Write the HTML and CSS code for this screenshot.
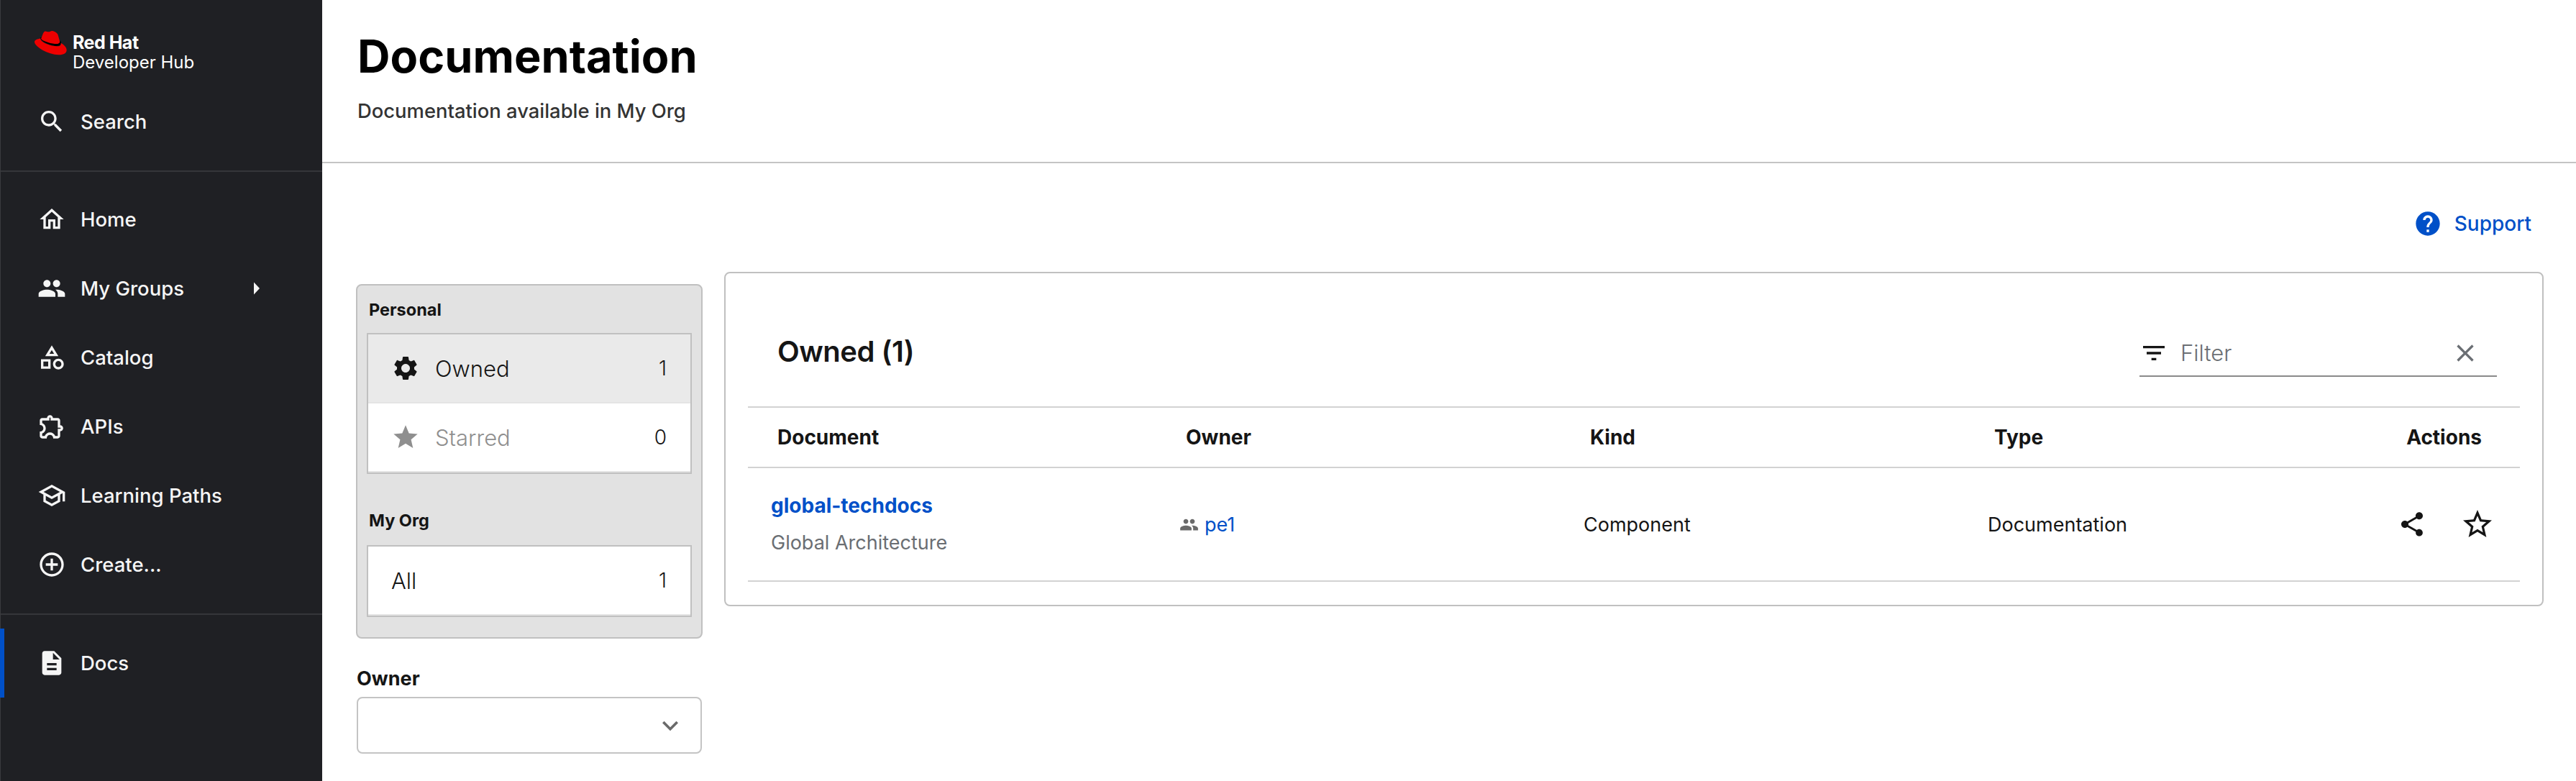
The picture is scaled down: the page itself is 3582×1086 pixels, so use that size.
FILE: index.html
```html
<!DOCTYPE html>
<html lang="en">
<head>
  <meta charset="UTF-8">
  <title>Documentation</title>
  <link rel="stylesheet" href="styles.css">
</head>
<body>
  <!-- sidebar -->
  <div class="sidebar">
    <div class="brand">
      <svg class="hat" viewBox="12 15 138 104"><path fill="#000" d="M37 44C37 58 75 76 100 79C115 81 127 76 125 62L118 54C118 66 105 68 95 66C75 62 45 50 40 42z"/><path fill="#ee0000" d="M40 48C44 38 48 22 55 17C60 14 66 19 72 19C78 19 82 14 88 15C98 17 110 24 112 32L120 60C120 69 110 71 98 70C75 68 42 56 40 48z"/><path fill="#ee0000" d="M37 47C25 50 12 52 12 62C12 82 70 117 115 117C138 117 149 108 149 96C149 85 138 74 124 66C127 76 118 82 105 80C75 78 37 62 37 47z"/></svg>
      <div class="brand-text">
        <div class="brand-name">Red Hat</div>
        <div class="brand-sub">Developer Hub</div>
      </div>
    </div>
    <div class="nav-item">
      <svg class="icon" viewBox="0 0 24 24"><path d="M15.5 14h-.79l-.28-.27C15.41 12.59 16 11.11 16 9.500 16 5.910 13.090 3 9.500 3S3 5.910 3 9.500 5.910 16 9.500 16c1.610 0 3.090-.59 4.230-1.570l.27.28v.79l5 4.990L20.490 19l-4.990-5zm-6 0C7.010 14 5 11.990 5 9.500S7.010 5 9.500 5 14 7.010 14 9.500 11.990 14 9.500 14z"/></svg>
      <span>Search</span>
    </div>
    <div class="nav-divider"></div>
    <div class="nav-item">
      <svg class="icon" viewBox="0 0 24 24"><path d="M12 5.690l5 4.500V18h-2v-6H9v6H7v-7.810l5-4.500M12 3L2 12h3v8h6v-6h2v6h6v-8h3L12 3z"/></svg>
      <span>Home</span>
    </div>
    <div class="nav-item">
      <svg class="icon" viewBox="0 0 24 24"><path d="M16 11c1.660 0 2.990-1.340 2.990-3S17.660 5 16 5c-1.660 0-3 1.340-3 3s1.340 3 3 3zm-8 0c1.660 0 2.990-1.340 2.990-3S9.660 5 8 5C6.340 5 5 6.340 5 8s1.340 3 3 3zm0 2c-2.330 0-7 1.170-7 3.500V19h14v-2.500c0-2.330-4.670-3.500-7-3.500zm8 0c-.29 0-.62.020-.97.050 1.160.84 1.970 1.970 1.970 3.450V19h6v-2.500c0-2.330-4.670-3.500-7-3.500z"/></svg>
      <span>My Groups</span>
      <svg class="nav-arrow" viewBox="0 0 10 24"><path d="M1 3.500l8 8.500-8 8.500z"/></svg>
    </div>
    <div class="nav-item">
      <svg class="icon" viewBox="0 0 24 24"><path d="M12 2l-5.500 9h11L12 2zm0 3.840L13.930 9h-3.870L12 5.840zM17.500 13c-2.490 0-4.500 2.010-4.500 4.500s2.010 4.500 4.500 4.500 4.500-2.010 4.500-4.500-2.010-4.500-4.500-4.500zm0 7c-1.380 0-2.500-1.120-2.500-2.500s1.120-2.500 2.500-2.500 2.500 1.120 2.500 2.500-1.120 2.500-2.500 2.500zM3 21.500h8v-8H3v8zm2-6h4v4H5v-4z"/></svg>
      <span>Catalog</span>
    </div>
    <div class="nav-item">
      <svg class="icon" viewBox="0 0 24 24"><path d="M10.500 4.500c.28 0 .5.220.5.5v2h6v6h2c.28 0 .5.220.5.5s-.22.5-.5.5h-2v6h-2.120c-.68-1.750-2.390-3-4.380-3s-3.700 1.250-4.380 3H4v-2.120c1.750-.68 3-2.390 3-4.380 0-1.990-1.240-3.700-2.990-4.380L4 7h6V5c0-.28.220-.5.5-.5m0-2C9.120 2.500 8 3.620 8 5H4c-1.100 0-1.990.9-1.990 2v3.800h.29c1.490 0 2.700 1.210 2.700 2.700s-1.210 2.700-2.700 2.700H2V20c0 1.100.9 2 2 2h3.800v-.3c0-1.490 1.210-2.700 2.700-2.700 1.490 0 2.700 1.210 2.700 2.700v.3H17c1.100 0 2-.9 2-2v-4c1.380 0 2.500-1.120 2.500-2.500S20.380 11 19 11V7c0-1.100-.9-2-2-2h-4c0-1.380-1.120-2.500-2.500-2.500z"/></svg>
      <span>APIs</span>
    </div>
    <div class="nav-item">
      <svg class="icon" viewBox="0 0 24 24"><path d="M12 3L1 9l4 2.180v6L12 21l7-3.820v-6l2-1.090V17h2V9L12 3zm6.820 6L12 12.720 5.180 9 12 5.280 18.820 9zM17 15.990l-5 2.730-5-2.730v-3.720L12 15l5-2.730v3.720z"/></svg>
      <span>Learning Paths</span>
    </div>
    <div class="nav-item">
      <svg class="icon" viewBox="0 0 24 24"><path d="M13 7h-2v4H7v2h4v4h2v-4h4v-2h-4V7zm-1-5C6.480 2 2 6.480 2 12s4.480 10 10 10 10-4.480 10-10S17.520 2 12 2zm0 18c-4.410 0-8-3.590-8-8s3.590-8 8-8 8 3.590 8 8-3.590 8-8 8z"/></svg>
      <span>Create...</span>
    </div>
    <div class="nav-divider lower"></div>
    <div class="nav-item active">
      <svg class="icon" viewBox="0 0 24 24"><path d="M14 2H6c-1.100 0-1.990.9-1.990 2L4 20c0 1.100.89 2 1.990 2H18c1.100 0 2-.9 2-2V8l-6-6zm2 16H8v-2h8v2zm0-4H8v-2h8v2zm-3-5V3.500L18.500 9H13z"/></svg>
      <span>Docs</span>
    </div>
  </div>

  <!-- main content -->
  <div class="main">
    <div class="header">
      <h1>Documentation</h1>
      <div class="subtitle">Documentation available in My Org</div>
    </div>

    <div class="content">
      <div class="support-row">
        <svg class="icon" viewBox="0 0 24 24"><path d="M12 2C6.480 2 2 6.480 2 12s4.480 10 10 10 10-4.480 10-10S17.520 2 12 2zm1 17h-2v-2h2v2zm2.070-7.750l-.9.920C13.450 12.900 13 13.500 13 15h-2v-.5c0-1.100.45-2.100 1.170-2.830l1.240-1.260c.37-.36.590-.86.590-1.410 0-1.100-.9-2-2-2s-2 .9-2 2H8c0-2.210 1.790-4 4-4s4 1.790 4 4c0 .88-.36 1.680-.93 2.250z"/></svg>
        <span>Support</span>
      </div>

      <div class="columns">
        <div class="filters">
          <div class="filter-panel">
            <div class="group-label">Personal</div>
            <div class="list-box">
              <div class="list-row selected">
                <svg class="icon" viewBox="0 0 24 24"><path d="M19.140 12.940c.04-.3.060-.61.060-.94 0-.32-.02-.64-.07-.94l2.030-1.580c.18-.14.230-.41.120-.61l-1.920-3.320c-.12-.22-.37-.29-.59-.22l-2.390.96c-.5-.38-1.030-.7-1.620-.94l-.36-2.540c-.04-.24-.24-.41-.48-.41h-3.840c-.24 0-.43.170-.47.41l-.36 2.540c-.59.240-1.130.570-1.620.94l-2.390-.96c-.22-.08-.47 0-.59.220L2.740 8.870c-.12.210-.08.470.120.610l2.030 1.580c-.05.3-.09.630-.09.940s.020.640.070.940l-2.030 1.580c-.18.140-.23.410-.12.610l1.920 3.320c.12.220.37.290.59.220l2.390-.96c.5.380 1.030.7 1.620.94l.36 2.540c.05.240.24.410.48.410h3.840c.24 0 .44-.17.47-.41l.36-2.540c.59-.24 1.130-.56 1.620-.94l2.390.96c.22.080.47 0 .59-.22l1.920-3.320c.12-.22.070-.47-.12-.61l-2.010-1.580zM12 15.600c-1.980 0-3.600-1.620-3.600-3.600s1.620-3.600 3.600-3.600 3.600 1.620 3.600 3.600-1.620 3.600-3.600 3.600z"/></svg>
                <span class="row-name">Owned</span>
                <span class="row-count">1</span>
              </div>
              <div class="list-row muted">
                <svg class="icon" viewBox="0 0 24 24"><path d="M12 17.270L18.180 21l-1.640-7.030L22 9.240l-7.190-.61L12 2 9.190 8.630 2 9.240l5.460 4.730L5.820 21z"/></svg>
                <span class="row-name">Starred</span>
                <span class="row-count">0</span>
              </div>
            </div>
            <div class="group-label org-label">My Org</div>
            <div class="list-box">
              <div class="list-row">
                <span class="row-name">All</span>
                <span class="row-count">1</span>
              </div>
            </div>
          </div>

          <div class="owner-field">
            <div class="owner-label">Owner</div>
            <div class="owner-select">
              <svg class="chevron" viewBox="0 0 24 24"><path d="M16.590 8.590L12 13.170 7.410 8.590 6 10l6 6 6-6z"/></svg>
            </div>
          </div>
        </div>

        <div class="card">
          <div class="toolbar">
            <h2>Owned (1)</h2>
            <div class="search-box">
              <svg class="icon" viewBox="0 0 24 24"><path d="M10 18h4v-2h-4v2zM3 6v2h18V6H3zm3 7h12v-2H6v2z"/></svg>
              <span class="placeholder">Filter</span>
              <svg class="icon clear" viewBox="0 0 24 24"><path d="M19 6.410L17.590 5 12 10.590 6.410 5 5 6.410 10.590 12 5 17.590 6.410 19 12 13.410 17.590 19 19 17.590 13.410 12 19 6.410z"/></svg>
            </div>
          </div>

          <table class="docs-table">
            <thead>
              <tr>
                <th class="col-doc">Document</th>
                <th class="col-std">Owner</th>
                <th class="col-std">Kind</th>
                <th class="col-std">Type</th>
                <th class="col-actions">Actions</th>
              </tr>
            </thead>
            <tbody>
              <tr>
                <td>
                  <a class="doc-link">global-techdocs</a>
                  <div class="doc-desc">Global Architecture</div>
                </td>
                <td>
                  <div class="owner-cell">
                    <svg class="people" viewBox="0 0 24 24"><path d="M16 11c1.660 0 2.990-1.340 2.990-3S17.660 5 16 5c-1.660 0-3 1.340-3 3s1.340 3 3 3zm-8 0c1.660 0 2.990-1.340 2.990-3S9.660 5 8 5C6.340 5 5 6.340 5 8s1.340 3 3 3zm0 2c-2.330 0-7 1.170-7 3.500V19h14v-2.500c0-2.330-4.670-3.500-7-3.500zm8 0c-.29 0-.62.020-.97.050 1.160.84 1.970 1.970 1.970 3.450V19h6v-2.500c0-2.330-4.670-3.500-7-3.500z"/></svg>
                    <a class="owner-link">pe1</a>
                  </div>
                </td>
                <td>Component</td>
                <td>Documentation</td>
                <td>
                  <div class="actions">
                    <svg class="icon" viewBox="0 0 24 24"><path d="M18 16.080c-.76 0-1.440.3-1.960.77L8.910 12.700c.05-.23.090-.46.090-.7s-.04-.47-.09-.7l7.050-4.110c.54.5 1.250.81 2.040.81 1.660 0 3-1.340 3-3s-1.340-3-3-3-3 1.340-3 3c0 .24.040.47.090.7L8.040 9.810C7.500 9.310 6.790 9 6 9c-1.660 0-3 1.340-3 3s1.340 3 3 3c.79 0 1.500-.31 2.040-.81l7.120 4.160c-.05.210-.08.430-.08.650 0 1.610 1.310 2.920 2.920 2.920 1.610 0 2.920-1.310 2.920-2.920s-1.310-2.920-2.920-2.920z"/></svg>
                    <svg class="star-outline" viewBox="0 0 24 24"><path d="M22 9.240l-7.190-.62L12 2 9.190 8.630 2 9.240l5.460 4.730L5.820 21 12 17.270 18.180 21l-1.630-7.030L22 9.240zM12 15.400l-3.760 2.270 1-4.280-3.320-2.880 4.380-.38L12 6.100l1.710 4.040 4.380.38-3.320 2.880 1 4.280L12 15.400z"/></svg>
                  </div>
                </td>
              </tr>
            </tbody>
          </table>
        </div>
      </div>
    </div>
  </div>
</body>
</html>
```

FILE: styles.css
```css
* {
  margin: 0;
  padding: 0;
  box-sizing: border-box;
}

body {
  font-family: Inter, "Noto Sans", sans-serif;
  background: #fff;
  color: #151515;
  height: 100vh;
  display: flex;
  overflow: hidden;
}

svg {
  display: block;
  flex-shrink: 0;
  fill: currentColor;
}

.icon {
  width: 40px;
  height: 40px;
}

/* sidebar */
.sidebar {
  width: 448px;
  flex-shrink: 0;
  background: #1f2024;
  border-left: 1px solid #3a3b3e;
  color: #fff;
  display: flex;
  flex-direction: column;
}

.brand {
  height: 121px;
  padding: 43px 0 0 47px;
  display: flex;
  gap: 8px;
}

.hat {
  width: 45px;
  height: 34px;
}

.brand-text {
  padding-top: 3px;
}

.brand-name {
  font-size: 25px;
  line-height: 27px;
  font-weight: 700;
  letter-spacing: -0.5px;
}

.brand-sub {
  font-size: 24px;
  line-height: 27px;
  font-weight: 400;
}

.nav-item {
  height: 96px;
  padding-left: 51px;
  display: flex;
  align-items: center;
  gap: 20px;
  font-size: 27.5px;
  font-weight: 500;
  color: #f5f5f5;
}

.nav-item.active {
  margin-left: -1px;
  padding-left: 46px;
  border-left: 6px solid #0050c8;
}

.nav-arrow {
  width: 10px;
  height: 24px;
  margin-left: auto;
  margin-right: 86px;
}

.nav-divider {
  height: 2px;
  margin: 20px 0 18px;
  background: #35363a;
}

.nav-divider.lower {
  margin: 20px 0 19px;
}

/* main */
.main {
  flex: 1;
  min-width: 0;
  display: flex;
  flex-direction: column;
}

.header {
  height: 227px;
  padding: 40px 0 0 49px;
  border-bottom: 2px solid #c4c4c4;
}

.header h1 {
  font-size: 63px;
  line-height: 76px;
  font-weight: 700;
  color: #000;
}

.subtitle {
  margin-top: 22px;
  font-size: 27.4px;
  line-height: 32px;
  font-weight: 500;
  color: #333;
}

.content {
  flex: 1;
  padding: 64px 45px 0 47px;
}

.support-row {
  height: 40px;
  padding-right: 17px;
  display: flex;
  justify-content: flex-end;
  align-items: center;
  gap: 17px;
  font-size: 28px;
  font-weight: 500;
  color: #0050c8;
}

.columns {
  margin-top: 47px;
  display: flex;
  gap: 30px;
  align-items: flex-start;
}

/* left filters */
.filters {
  width: 482px;
  flex-shrink: 0;
  margin-top: 17px;
}

.filter-panel {
  background: #e2e2e2;
  border: 2px solid #c0c0c0;
  border-radius: 8px;
  padding: 15px 13px 28px;
}

.group-label {
  padding-left: 3px;
  font-size: 23.5px;
  line-height: 38px;
  font-weight: 700;
  margin-bottom: 13px;
}

.org-label {
  margin-top: 46px;
  margin-bottom: 15px;
}

.list-box {
  border: 2px solid #c0c0c0;
  background: #fff;
}

.list-row {
  height: 96px;
  padding: 0 33px 0 32px;
  display: flex;
  align-items: center;
  gap: 21px;
  font-size: 31px;
  font-weight: 300;
  border-bottom: 2px solid #e4e4e4;
}

.list-row.selected {
  background: #eaeaea;
}

.list-row.muted .row-name,
.list-row.muted .icon {
  color: #8f8f8f;
}

.row-count {
  margin-left: auto;
  font-size: 28px;
}

.owner-field {
  margin: 37px 1px 0;
}

.owner-label {
  font-size: 27px;
  line-height: 38px;
  font-weight: 700;
  margin-bottom: 6px;
}

.owner-select {
  height: 79px;
  border: 2px solid #c4c4c4;
  border-radius: 8px;
  padding-right: 20px;
  display: flex;
  align-items: center;
  justify-content: flex-end;
  color: #6a6a6a;
}

.chevron {
  width: 44px;
  height: 44px;
}

/* right card */
.card {
  flex: 1;
  min-width: 0;
  border: 2px solid #c0c0c0;
  border-radius: 8px;
  padding: 0 31px 32px;
}

.toolbar {
  height: 185px;
  padding: 32px 32px 0 41px;
  display: flex;
  align-items: center;
  justify-content: space-between;
}

.toolbar h2 {
  font-size: 40px;
  font-weight: 600;
  letter-spacing: -0.5px;
}

.search-box {
  width: 497px;
  height: 64px;
  margin-top: 6px;
  padding-right: 24px;
  display: flex;
  align-items: center;
  gap: 17px;
  border-bottom: 2px solid #8a8a8a;
}

.placeholder {
  font-size: 31px;
  font-weight: 300;
  color: #6a6e73;
}

.clear {
  margin-left: auto;
  color: #6a6e73;
}

.docs-table {
  width: 100%;
  table-layout: fixed;
  border-collapse: separate;
  border-spacing: 0;
}

.docs-table th {
  height: 86px;
  padding-left: 41px;
  text-align: left;
  font-size: 28px;
  font-weight: 700;
  border-top: 2px solid #d2d2d2;
  border-bottom: 2px solid #d2d2d2;
}

.col-doc {
  width: 568px;
}

.col-std {
  width: 562px;
}

.docs-table th.col-actions {
  padding-left: 0;
  padding-right: 53px;
  text-align: right;
}

.docs-table td {
  height: 158px;
  padding-left: 32px;
  font-size: 27px;
  font-weight: 400;
  border-bottom: 2px solid #d2d2d2;
}

.doc-link {
  display: block;
  font-size: 28px;
  line-height: 52px;
  font-weight: 700;
  color: #0050c8;
}

.doc-desc {
  font-size: 27px;
  line-height: 52px;
  color: #6a6e73;
}

.owner-cell {
  display: flex;
  align-items: center;
  gap: 8px;
}

.people {
  width: 27px;
  height: 27px;
  color: #6a6a6a;
}

.owner-link {
  color: #0050c8;
}

.actions {
  padding-right: 35px;
  display: flex;
  justify-content: flex-end;
  align-items: center;
  gap: 47px;
}

.star-outline {
  width: 48px;
  height: 48px;
}
```
